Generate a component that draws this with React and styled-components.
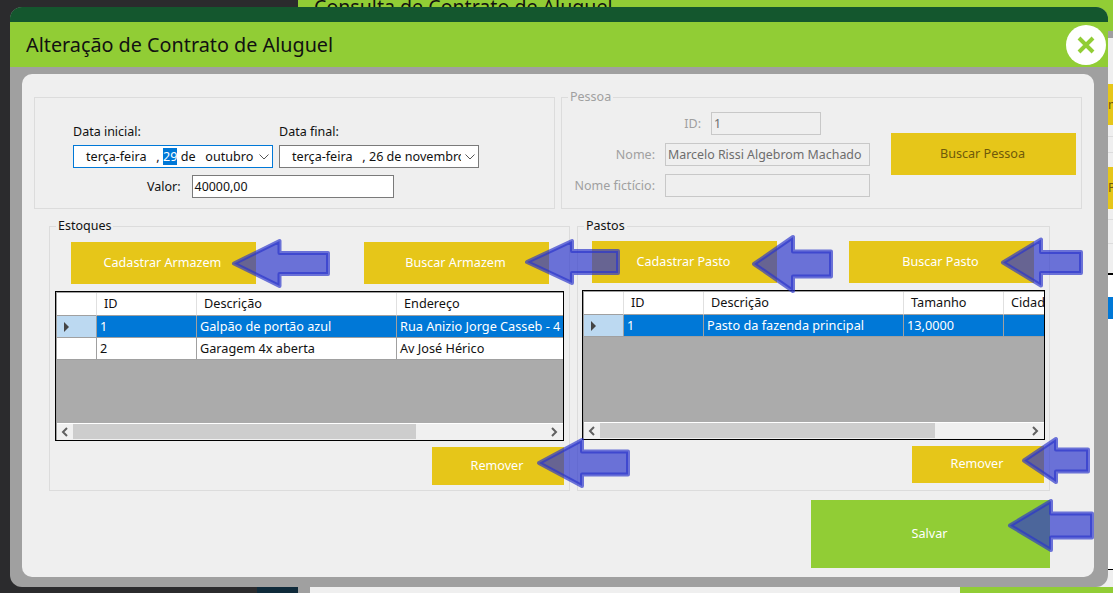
import styled, { createGlobalStyle } from 'styled-components'

const GlobalStyle = createGlobalStyle`
  html, body {
    margin: 0;
    padding: 0;
    width: 1113px;
    height: 593px;
    overflow: hidden;
    font-family: "Noto Sans", "Open Sans", sans-serif;
  }
`

const Page = styled.div`
  position: relative;
  width: 1113px;
  height: 593px;
  overflow: hidden;
  display: flex;
  background: #2b2b2d;
`

const Sidebar = styled.div`
  width: 298px;
  flex: none;
  display: flex;
  justify-content: flex-end;
  align-items: flex-end;
`

const SidebarLogo = styled.div`
  width: 41px;
  height: 6px;
  background: #0f2a3a;
`

const BackPage = styled.div`
  flex: 1;
  display: flex;
  flex-direction: column;
  background: #efefef;
`

const BackHeader = styled.div`
  height: 31px;
  flex: none;
  background: #91cd35;
  padding-left: 16px;
  font-size: 19.6px;
  line-height: 14px;
  color: #111;
  white-space: nowrap;
  overflow: hidden;
`

const BackSub = styled.div`
  height: 7px;
  flex: none;
  background: #a0a0a0;
`

const BackStub = styled.div`
  align-self: flex-end;
  width: 20px;
  height: ${(p) => p.$height}px;
  margin-top: ${(p) => p.$top}px;
  background: ${(p) => p.$color};
  box-sizing: border-box;
  padding-left: 15px;
  font-size: 12.6px;
  line-height: ${(p) => p.$height}px;
  color: #6e5a0a;
  white-space: nowrap;
  overflow: hidden;
`

const BackFooter = styled.div`
  margin-top: auto;
  height: 6px;
  flex: none;
  display: flex;
  justify-content: space-between;
`

const FooterTab = styled.div`
  width: ${(p) => p.$width}px;
  background: ${(p) => p.$color};
`

const Modal = styled.div`
  position: absolute;
  left: 10px;
  top: 7px;
  width: 1098px;
  height: 580px;
  display: flex;
  flex-direction: column;
  background: #a0a0a0;
  border-radius: 12px;
  overflow: hidden;
`

const TopStrip = styled.div`
  height: 15px;
  flex: none;
  background: #14572e;
`

const TitleBar = styled.div`
  height: 45px;
  flex: none;
  display: flex;
  align-items: center;
  justify-content: space-between;
  padding: 0 2px 0 16px;
  background: #91cd35;
`

const Title = styled.div`
  font-size: 19.8px;
  color: #111;
`

const CloseButton = styled.div`
  width: 40px;
  height: 40px;
  border-radius: 50%;
  background: #fff;
  display: flex;
  align-items: center;
  justify-content: center;
`

const Body = styled.div`
  flex: 1;
  padding: 7px 14px 10px 12px;
  display: flex;
`

const Panel = styled.div`
  flex: 1;
  background: #efefef;
  border-radius: 10px;
  padding: 23px 12px 0;
`

const TopRow = styled.div`
  display: flex;
  gap: 6px;
  height: 112px;
`

const PlainBox = styled.div`
  width: 521px;
  box-sizing: border-box;
  border: 1px solid #dcdcdc;
  padding: 26px 0 0 38px;
`

const Group = styled.fieldset`
  box-sizing: border-box;
  margin: -8px 0 0;
  padding: 0;
  min-width: 0;
  border: 1px solid #dcdcdc;
  width: ${(p) => p.$width}px;
  height: ${(p) => p.$height}px;
`

const Legend = styled.legend`
  font-size: 12.5px;
  line-height: 16px;
  padding: 0 2px;
  margin-left: 6px;
  color: ${(p) => (p.$disabled ? '#a0a0a0' : '#111')};
`

const DateRow = styled.div`
  display: flex;
  gap: 6px;
`

const DateCol = styled.div`
  display: flex;
  flex-direction: column;
`

const Label = styled.span`
  font-size: 12.5px;
  line-height: 16px;
  white-space: nowrap;
  color: ${(p) => (p.$disabled ? '#a0a0a0' : '#111')};
`

const DateField = styled.div`
  box-sizing: border-box;
  width: 200px;
  height: 23px;
  margin-top: 5px;
  padding-left: 12px;
  background: #fff;
  border: 1px solid ${(p) => (p.$focused ? '#0078d7' : '#7a7a7a')};
  display: flex;
  align-items: center;
  font-size: 12.6px;
  white-space: pre;
  color: #111;
  position: relative;
  overflow: hidden;
`

const DateChevron = styled.span`
  position: absolute;
  right: 0;
  top: 0;
  bottom: 0;
  width: 17px;
  display: flex;
  align-items: center;
  justify-content: center;
  background: #fff;
`

const Selected = styled.span`
  background: #0078d7;
  color: #fff;
`

const ValueRow = styled.div`
  display: flex;
  align-items: center;
  margin: 7px 0 0 74px;
  gap: 11px;
`

const TextBox = styled.div`
  box-sizing: border-box;
  width: ${(p) => p.$width}px;
  height: 23px;
  padding-left: 2px;
  display: flex;
  align-items: center;
  font-size: 12.4px;
  white-space: nowrap;
  background: ${(p) => (p.$disabled ? '#efefef' : '#fff')};
  border: 1px solid ${(p) => (p.$disabled ? '#c8c8c8' : '#7a7a7a')};
  color: ${(p) => (p.$disabled ? '#6d6d6d' : '#111')};
`

const PersonInner = styled.div`
  display: flex;
  align-items: flex-start;
  height: 100%;
`

const PersonFields = styled.div`
  width: 308px;
  flex: none;
  padding-top: 7px;
  display: grid;
  grid-template-columns: 93px 1fr;
  column-gap: 10px;
  row-gap: 8px;
  align-items: center;
  justify-items: end;
`

const IdBox = styled.div`
  grid-column: 1 / 3;
  justify-self: stretch;
  display: flex;
  justify-content: flex-end;
  align-items: center;
  gap: 10px;
  padding-right: 49px;
`

const Button = styled.div`
  box-sizing: border-box;
  width: ${(p) => p.$width}px;
  height: ${(p) => p.$height}px;
  flex: none;
  display: flex;
  align-items: center;
  justify-content: center;
  padding: 0 2px 2px 0;
  font-size: 12.6px;
  background: ${(p) => (p.$green ? '#91cd35' : '#e6c619')};
  color: ${(p) => (p.$dim ? '#6e5a0a' : '#fff')};
`

const PersonButton = styled(Button)`
  margin: 28px 0 0 21px;
`

const BottomRow = styled.div`
  display: flex;
  margin: 17px 0 0 15px;
  gap: 7px;
`

const ButtonRow = styled.div`
  display: flex;
  justify-content: space-between;
  padding: ${(p) => p.$pad};
`

const RemoveRow = styled.div`
  display: flex;
  justify-content: flex-end;
  padding-right: 5px;
  margin-top: 6px;
`

const GridWrap = styled.div`
  box-sizing: border-box;
  width: ${(p) => p.$width}px;
  height: 150px;
  margin: 7px 0 0 ${(p) => p.$left}px;
  border: 1px solid #000;
  padding: 1px 0 0 1px;
  background: #a0a0a0;
  display: flex;
  flex-direction: column;
  overflow: hidden;
`

const GridRows = styled.div`
  flex: 1;
  overflow: hidden;
  background: #ababab;
`

const GridRow = styled.div`
  display: grid;
  grid-template-columns: ${(p) => p.$cols};
  height: 22px;
  box-sizing: border-box;
  width: max-content;
  background: ${(p) => (p.$selected ? '#0078d7' : '#fff')};
  color: ${(p) => (p.$selected ? '#fff' : '#111')};
`

const HeadRow = styled(GridRow)`
  height: 23px;
  background: #fff;
  color: #111;
`

const HeadCell = styled.div`
  font-size: 12.7px;
  line-height: 21px;
  padding-left: 7px;
  white-space: nowrap;
  overflow: hidden;
  border-right: 1px solid #e0e0e0;
  border-bottom: 1px solid #a0a0a0;
`

const Cell = styled.div`
  font-size: 12.7px;
  line-height: 21px;
  padding-left: 3px;
  white-space: nowrap;
  overflow: hidden;
  border-right: 1px solid #a0a0a0;
  border-bottom: 1px solid #a0a0a0;
`

const RowHeader = styled.div`
  display: flex;
  align-items: center;
  padding-left: 7px;
  background: ${(p) => (p.$selected ? '#bcd9f1' : '#fff')};
  border-right: 1px solid #a0a0a0;
  border-bottom: 1px solid #a0a0a0;
`

const Pointer = styled.div`
  width: 0;
  height: 0;
  border-left: 5px solid #444;
  border-top: 5px solid transparent;
  border-bottom: 5px solid transparent;
`

const ScrollBar = styled.div`
  height: 17px;
  box-sizing: border-box;
  flex: none;
  background: #f0f0f0;
  border-top: 1px solid #fff;
  padding-right: 1px;
  display: flex;
  align-items: flex-start;
  justify-content: space-between;
`

const ScrollBtn = styled.div`
  width: 16px;
  height: 15px;
  display: flex;
  align-items: center;
  justify-content: center;
`

const ScrollThumb = styled.div`
  height: 15px;
  flex: none;
  width: ${(p) => p.$width}px;
  margin-right: auto;
  background: #cdcdcd;
`

const SaveRow = styled.div`
  display: flex;
  justify-content: flex-end;
  padding-right: 32px;
  margin-top: 9px;
`

const ArrowLayer = styled.svg`
  position: absolute;
  left: 0;
  top: 0;
  width: 1113px;
  height: 593px;
  pointer-events: none;
`

const Chevron = ({ left }) => (
  <svg width="8" height="10" viewBox="0 0 8 10">
    <path d={left ? 'M6 1 L2 5 L6 9' : 'M2 1 L6 5 L2 9'} fill="none" stroke="#606060" strokeWidth="2" />
  </svg>
)

const DownChevron = () => (
  <svg width="10" height="6" viewBox="0 0 10 6">
    <path d="M0.5 0.5 L5 5 L9.5 0.5" fill="none" stroke="#555" />
  </svg>
)

const Arrow = ({ tip, y, head, right, half, shaft }) => (
  <path
    d={`M${tip} ${y} L${head} ${y - half} V${y - shaft} H${right} V${y + shaft} H${head} V${y + half} Z`}
    fill="rgba(43,53,204,0.68)"
    stroke="rgba(43,53,204,0.68)"
    strokeWidth="4"
    strokeLinejoin="round"
  />
)

const arrows = [
  { tip: 234, y: 263.5, head: 279.5, right: 328, half: 22.5, shaft: 10.5 },
  { tip: 527, y: 262, head: 572, right: 618, half: 21, shaft: 11 },
  { tip: 754, y: 264, head: 793, right: 831, half: 27, shaft: 12.5 },
  { tip: 1003, y: 262.5, head: 1041, right: 1081, half: 23, shaft: 10.5 },
  { tip: 539, y: 463, head: 582, right: 628, half: 23, shaft: 11.5 },
  { tip: 1024, y: 460.5, head: 1056, right: 1088, half: 21.5, shaft: 11 },
  { tip: 1010, y: 525.5, head: 1051, right: 1092, half: 24.5, shaft: 12 },
]

const DataGrid = ({ width, left, cols, head, rows, thumb }) => (
  <GridWrap $width={width} $left={left}>
    <GridRows>
      <HeadRow $cols={cols}>
        <HeadCell />
        {head.map((h) => <HeadCell key={h}>{h}</HeadCell>)}
      </HeadRow>
      {rows.map((row, i) => (
        <GridRow key={row[0]} $cols={cols} $selected={i === 0}>
          <RowHeader $selected={i === 0}>{i === 0 && <Pointer />}</RowHeader>
          {row.map((c, j) => <Cell key={j}>{c}</Cell>)}
        </GridRow>
      ))}
    </GridRows>
    <ScrollBar>
      <ScrollBtn><Chevron left /></ScrollBtn>
      <ScrollThumb $width={thumb} />
      <ScrollBtn><Chevron /></ScrollBtn>
    </ScrollBar>
  </GridWrap>
)

export default function App() {
  return (
    <Page>
      <GlobalStyle />
      <Sidebar>
        <SidebarLogo />
      </Sidebar>
      <BackPage>
        <BackHeader>Consulta de Contrato de Aluguel</BackHeader>
        <BackSub />
        <BackStub $top={46} $height={41} $color="#e6c619">m</BackStub>
        <BackStub $top={11} $height={1} $color="#dcdcdc" />
        <BackStub $top={15} $height={1} $color="#dcdcdc" />
        <BackStub $top={14} $height={42} $color="#e6c619">Pa</BackStub>
        <BackStub $top={10} $height={1} $color="#dcdcdc" />
        <BackStub $top={23} $height={1} $color="#dcdcdc" />
        <BackStub $top={29} $height={2} $color="#000" />
        <BackStub $top={0} $height={22} $color="#fff" />
        <BackStub $top={0} $height={22} $color="#0078d7" />
        <BackStub $top={0} $height={250} $color="#fff" />
        <BackStub $top={0} $height={1} $color="#000" />
        <BackFooter>
          <FooterTab $width={12} $color="#a0a0a0" />
          <FooterTab $width={153} $color="#91cd35" />
        </BackFooter>
      </BackPage>
      <Modal>
        <TopStrip />
        <TitleBar>
          <Title>Alteração de Contrato de Aluguel</Title>
          <CloseButton>
            <svg width="18" height="18" viewBox="0 0 18 18">
              <path d="M2 2 L16 16 M16 2 L2 16" stroke="#91cd35" strokeWidth="4" />
            </svg>
          </CloseButton>
        </TitleBar>
        <Body>
          <Panel>
            <TopRow>
              <PlainBox>
                <DateRow>
                  <DateCol>
                    <Label>Data inicial:</Label>
                    <DateField $focused>
                      {'terça-feira   , '}<Selected>29</Selected>{' de   outubro'}
                      <DateChevron><DownChevron /></DateChevron>
                    </DateField>
                  </DateCol>
                  <DateCol>
                    <Label>Data final:</Label>
                    <DateField>
                      {'terça-feira   , 26 de novembro'}
                      <DateChevron><DownChevron /></DateChevron>
                    </DateField>
                  </DateCol>
                </DateRow>
                <ValueRow>
                  <Label>Valor:</Label>
                  <TextBox $width={202}>40000,00</TextBox>
                </ValueRow>
              </PlainBox>
              <Group $width={521} $height={120}>
                <Legend $disabled>Pessoa</Legend>
                <PersonInner>
                  <PersonFields>
                    <IdBox>
                      <Label $disabled>ID:</Label>
                      <TextBox $disabled $width={110}>1</TextBox>
                    </IdBox>
                    <Label $disabled>Nome:</Label>
                    <TextBox $disabled $width={205}>Marcelo Rissi Algebrom Machado</TextBox>
                    <Label $disabled>Nome fictício:</Label>
                    <TextBox $disabled $width={205} />
                  </PersonFields>
                  <PersonButton $dim $width={185} $height={42}>Buscar Pessoa</PersonButton>
                </PersonInner>
              </Group>
            </TopRow>
            <BottomRow>
              <Group $width={521} $height={273}>
                <Legend>Estoques</Legend>
                <ButtonRow $pad="8px 20px 0 21px">
                  <Button $width={185} $height={42}>Cadastrar Armazem</Button>
                  <Button $width={185} $height={42}>Buscar Armazem</Button>
                </ButtonRow>
                <DataGrid
                  width={509}
                  left={5}
                  cols="40px 100px 200px 200px"
                  head={['ID', 'Descrição', 'Endereço']}
                  rows={[
                    ['1', 'Galpão de portão azul', 'Rua Anizio Jorge Casseb - 4'],
                    ['2', 'Garagem 4x aberta', 'Av José Hérico'],
                  ]}
                  thumb={343}
                />
                <RemoveRow>
                  <Button $width={132} $height={38}>Remover</Button>
                </RemoveRow>
              </Group>
              <Group $width={473} $height={273}>
                <Legend>Pastos</Legend>
                <ButtonRow $pad="7px 15px 0 14px">
                  <Button $width={185} $height={42}>Cadastrar Pasto</Button>
                  <Button $width={185} $height={42}>Buscar Pasto</Button>
                </ButtonRow>
                <DataGrid
                  width={463}
                  left={4}
                  cols="40px 80px 200px 100px 100px"
                  head={['ID', 'Descrição', 'Tamanho', 'Cidade']}
                  rows={[['1', 'Pasto da fazenda principal', '13,0000', '']]}
                  thumb={335}
                />
                <RemoveRow>
                  <Button $width={132} $height={37}>Remover</Button>
                </RemoveRow>
              </Group>
            </BottomRow>
            <SaveRow>
              <Button $green $width={239} $height={68}>Salvar</Button>
            </SaveRow>
          </Panel>
        </Body>
      </Modal>
      <ArrowLayer viewBox="0 0 1113 593">
        {arrows.map((a) => <Arrow key={a.tip} {...a} />)}
      </ArrowLayer>
    </Page>
  )
}
